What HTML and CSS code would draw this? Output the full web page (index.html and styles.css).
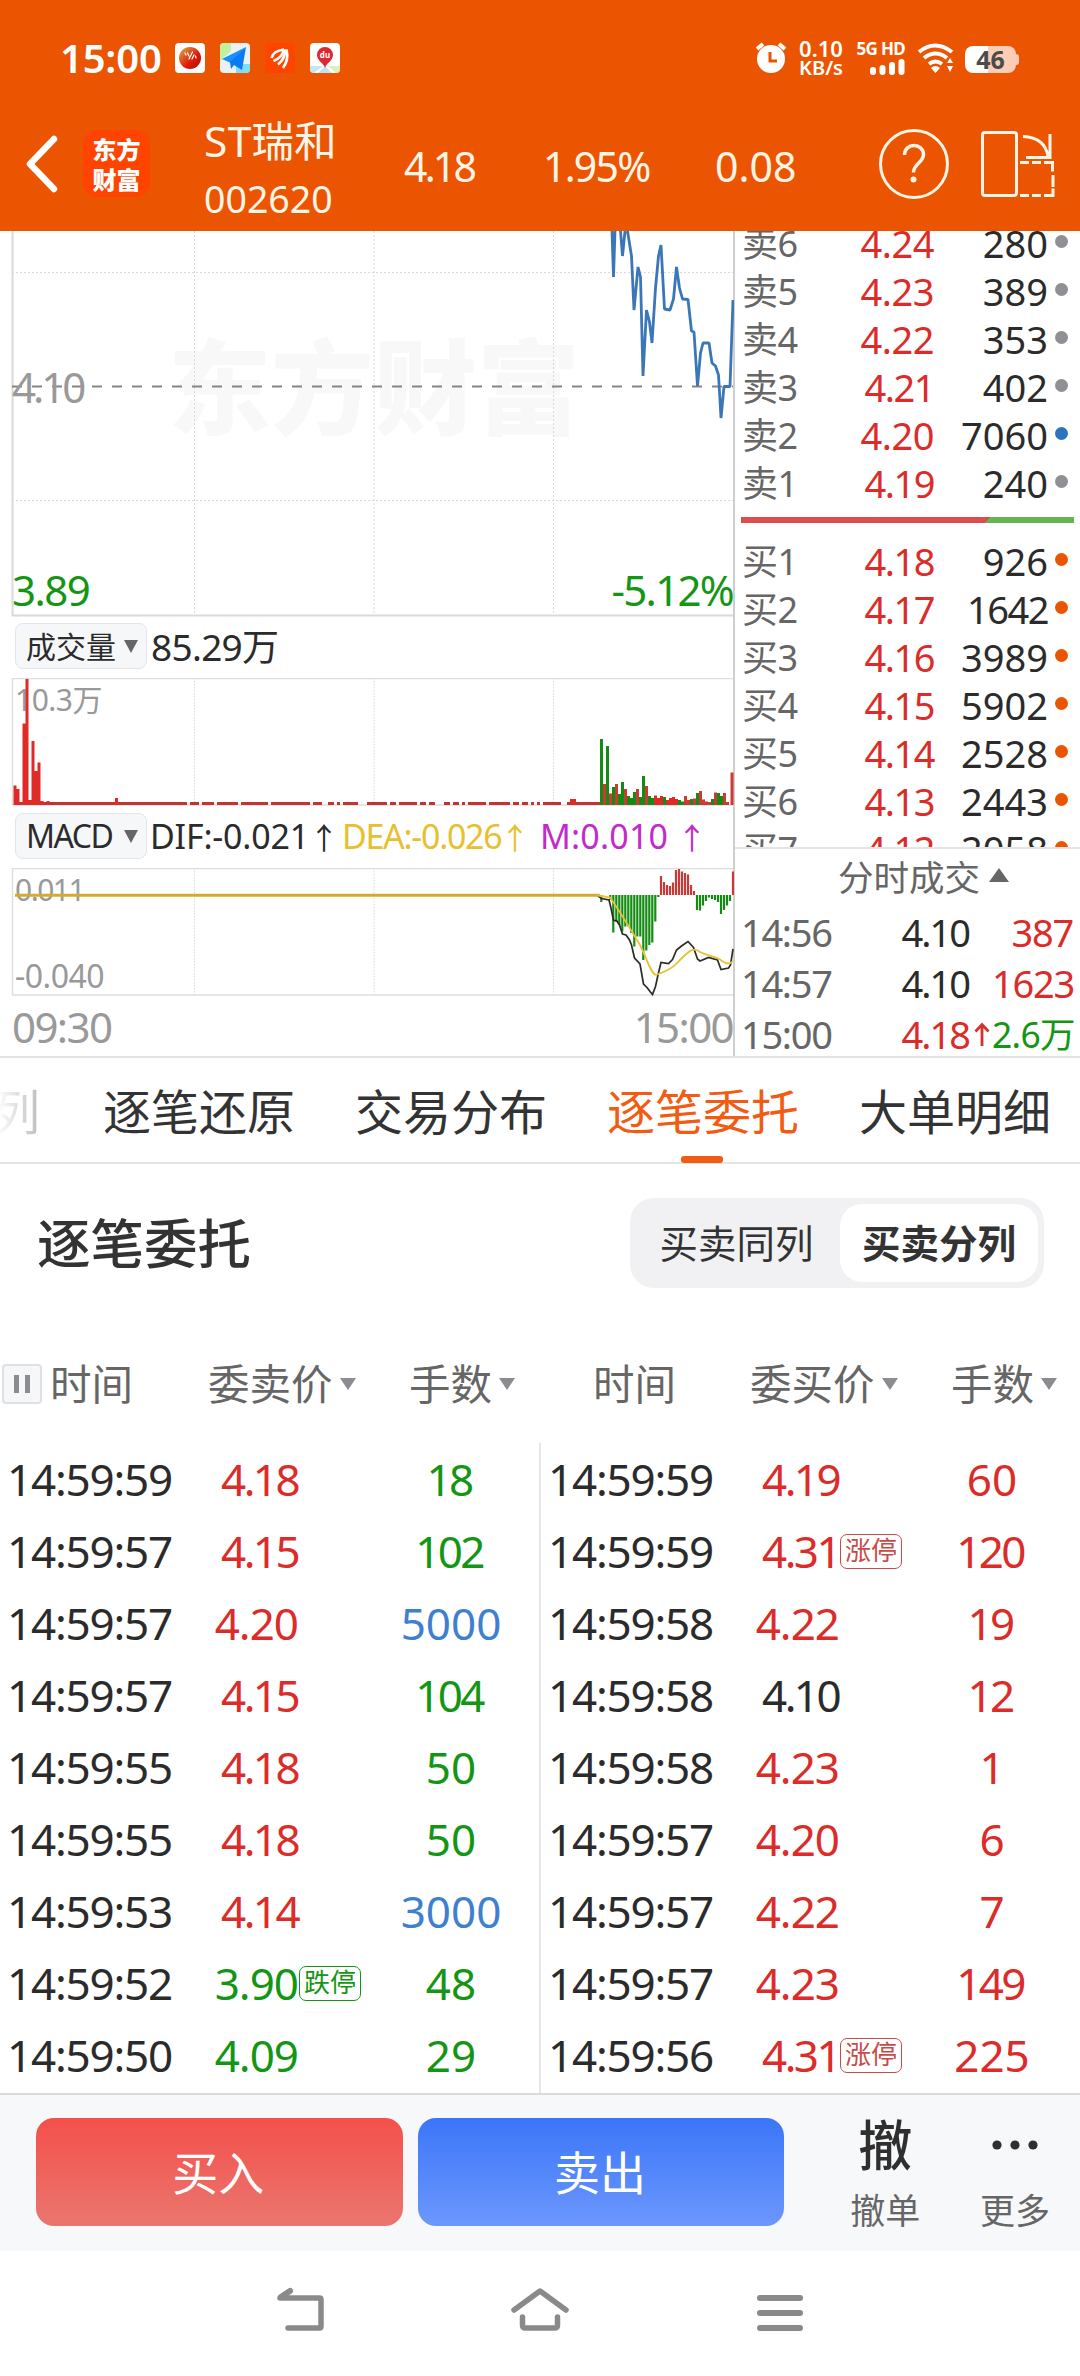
FILE: index.html
```html
<!DOCTYPE html>
<html lang="zh-CN">
<head>
<meta charset="utf-8">
<title>ST瑞和 002620</title>
<link rel="stylesheet" href="styles.css">
</head>
<body>
<header class="top">
  <div class="status">
    <span class="clock">15:00</span>
    <div class="apps">
      <svg viewBox="0 0 30 30"><defs><linearGradient id="g1" x1="0" y1="0" x2="1" y2="1"><stop offset="0.1" stop-color="#d99a3a"/><stop offset="0.6" stop-color="#e01808"/><stop offset="1" stop-color="#a80d08"/></linearGradient></defs><rect width="30" height="30" rx="4" fill="#fff"/><circle cx="15" cy="15" r="11" fill="url(#g1)"/><path d="M10 10l1 2M12.500 10l1.500 3M17.500 9l-3.500 7M19 12l-2 4M20.500 13l.5 2" stroke="#fff" stroke-width="1.200" stroke-linecap="round"/></svg>
      <svg viewBox="0 0 30 30"><rect width="30" height="30" rx="4" fill="#eaf2f6"/><path d="M0 18V4a4 4 0 0 1 4-4h7v8z" fill="#c3f0a0"/><path d="M16 21h14v5a4 4 0 0 1-4 4H16z" fill="#7fdcfb"/><path d="M26 4L2 16l9 4z" fill="#1590ff"/><path d="M26 4L10 19l1 7 3-4 8 5z" fill="#0a7af5"/></svg>
      <svg viewBox="0 0 30 30"><rect width="30" height="30" rx="4" fill="#ff4400"/><g fill="none" stroke="#fff" stroke-width="2.700"><path d="M6.500 15Q8 8 19 6.500"/><path d="M8.500 18Q17 15 19 6.500"/><path d="M13 21.500Q20 16 20.500 6.500"/><path d="M18 25Q24 17 21.500 6.500"/></g></svg>
      <svg viewBox="0 0 30 30"><rect width="30" height="30" rx="4" fill="#fff"/><path d="M0 23h13L4 30a4 4 0 0 1-4-4z" fill="#c3e6f5"/><path d="M30 23H18l8 7a4 4 0 0 0 4-4z" fill="#dff0b4"/><path d="M15 23l-7 7h14z" fill="#bfe2f6"/><path d="M15 25c-1-5-8-7-8-13a8 8 0 0 1 16 0c0 6-7 8-8 13z" fill="#e0262f"/><text x="15" y="15" font-size="8" font-weight="700" fill="#fff" text-anchor="middle">du</text></svg>
    </div>
    <div class="sys">
      <svg class="alarm" viewBox="0 0 30 32"><circle cx="15" cy="17" r="14" fill="#fff"/><path d="M1 7l6-5M29 7l-6-5" stroke="#fff" stroke-width="4"/><path d="M14 10v9h7" fill="none" stroke="#eb5502" stroke-width="3"/></svg>
      <div class="speed"><span>0.10</span><span>KB/s</span></div>
      <div class="signal"><span>5G HD</span><svg viewBox="0 0 35 16"><path d="M3 11v2M12.500 9v4M22 6v7M31.500 3v10" stroke="#fff" stroke-width="6" stroke-linecap="round"/></svg></div>
      <svg class="wifi" viewBox="0 0 38 30"><path d="M2 9q16-13 33 0M7 15q11.500-9 23 0M12 21q6.500-5 13 0" fill="none" stroke="#fff" stroke-width="4"/><path d="M14 25q4.500-4 9 0l-4.500 5z" fill="#fff"/><path d="M30 20l3-5 3 5zM30 23l3 6 3-6z" fill="#fff"/></svg>
      <div class="battery"><b>46</b></div>
    </div>
  </div>
  <div class="nav">
    <svg class="back" viewBox="0 0 36 60"><path d="M29 5L5 30l24 25" fill="none" stroke="#fff" stroke-width="6.500" stroke-linecap="round" stroke-linejoin="round"/></svg>
    <div class="logo"><span>东方</span><span>财富</span></div>
    <div class="stock"><span class="nm">ST瑞和</span><span class="code">002620</span></div>
    <span class="q q1">4.18</span><span class="q q2">1.95%</span><span class="q q3">0.08</span>
    <svg class="help" viewBox="0 0 72 72"><circle cx="36" cy="36" r="33.500" fill="none" stroke="#fff5e6" stroke-width="3"/><path d="M26.500 27c0-13 19-12 19-.5 0 8-10 9-10 18" fill="none" stroke="#fff5e6" stroke-width="3.500"/><circle cx="35.500" cy="51.500" r="3" fill="#fff5e6"/></svg>
    <svg class="rotate" viewBox="0 0 76 70" fill="none" stroke="#fff5e6" stroke-width="3"><rect x="3.500" y="3.500" width="34" height="63" rx="2.500"/><path d="M44 7.500q22 1 25 20M71 5v23.500H47"/><path d="M41 33.500h9M53 33.500h9M65 33.500h8.500v9M74 46v12M41 66.500h9M53 66.500h9M65 66.500h9v-7"/></svg>
  </div>
</header>

<section class="market">
  <div class="charts">
    <div class="price">
      <div class="mark">东方财富</div>
      <svg viewBox="0 231 734 386">
        <g stroke="#d9d9d9" stroke-dasharray="2 2"><path d="M12 272.500H733M12 500.500H733M194.500 231V615M374 231V615M553.500 231V615"/></g>
        <path d="M12.500 231V616M12 615.500H733" stroke="#dadada" stroke-width="2" fill="none"/>
        <path d="M12 386.500H733" stroke="#858585" stroke-width="2" stroke-dasharray="10 10"/>
        <path d="M612 231L613.500 277 615 231M620.500 231L622.500 256 625 231M627.500 231L631.500 256 634 310 638 267 640.500 277 643 376 646.500 310 649.500 322 652 343 655.500 288 658.500 256 661 245 664.500 309 670 310 673.500 299 676.500 267 679.500 288 682.500 299 688 299.500 691.500 331 694 332 697.500 386 700.500 353 703 343 709 343 712 363 715.500 366 718.500 375 721 418 724 386.500 730 386.500 733 300" fill="none" stroke="#3a76b8" stroke-width="2.800" stroke-linejoin="bevel"/>
      </svg>
      <span class="mid">4.10</span><span class="lo">3.89</span><span class="pct">-5.12%</span>
    </div>
    <div class="ind"><span class="chip">成交量<i class="dn"></i></span><span class="vol">85.29万</span></div>
    <div class="pane">
      <span class="p1">10.3万</span>
      <svg viewBox="0 678 734 128">
        <path d="M194.500 678V805M374 678V805M553.500 678V805" stroke="#d9d9d9" stroke-dasharray="1.500 1.500"/>
        <path d="M12.500 805V678.500H733M12 805H733" stroke="#dedede" stroke-width="1.500" fill="none"/>
        <path d="M43 803.500H187M190 803.500h9M202 803.500h12M217 803.500h21M241 803.500h27M271 803.500h39M313 803.500h9M328 803.500h6M337 803.500h3M343 803.500h15M367 803.500h20M390 803.500h6M399 803.500h18M420 803.500h6M429 803.500h6M444 803.500h6M453 803.500h6M462 803.500h3M468 803.500h18M489 803.500h21M513 803.500h6M522 803.500h6M531 803.500h3M537 803.500h3M543 803.500h18M567 803.500h33" stroke="#c4332f" stroke-width="3"/>
        <g fill="none" stroke-width="3">
          <path stroke="#e02a27" d="M15 805V785.500M18 805V789M21 805V802M24 805V723.500M27 805V679M30 805V800M33 805V741M36 805V771M39 805V762.500M42 805V801M48 805V801M116.500 805V798M571.500 805V799M574.500 805V799M655.500 805V795.500M658.500 805V798M661.500 805V796M667.500 805V800M670.500 805V798M673.500 805V797M676.500 805V799"/>
          <path stroke="#cc3a34" d="M604.500 805V784M610.500 805V793.500M616.500 805V784M625.500 805V789M637.500 805V789M646.500 805V786M685.500 805V796M688.500 805V800M694.500 805V798.500M700.500 805V791M703.500 805V799.500M706.500 805V801.500M709.500 805V802M715.500 805V792.500M724.500 805V793M727.500 805V802M732 805V772.500"/>
          <path stroke="#148c14" d="M601.500 805V739M607.500 805V746M613.500 805V787M619.500 805V794M622.500 805V782M628.500 805V796M631.500 805V798M634.500 805V792M640.500 805V797M643.500 805V776M649.500 805V796M652.500 805V798M664.500 805V797M679.500 805V800M682.500 805V801.500M691.500 805V799M697.500 805V793M712.500 805V799M718.500 805V793M721.500 805V796"/>
        </g>
      </svg>
    </div>
    <div class="ind"><span class="chip macd">MACD<i class="dn"></i></span><span class="dif">DIF:-0.021</span><u>↑</u><span class="dea">DEA:-0.026</span><u class="y">↑</u><span class="m">M:0.010</span><u class="p">↑</u></div>
    <div class="pane">
      <span class="p1 m1">0.011</span><span class="p2">-0.040</span>
      <svg viewBox="0 868 734 128">
        <path d="M194.500 868V995M374 868V995M553.500 868V995" stroke="#d9d9d9" stroke-dasharray="1.500 1.500"/>
        <path d="M12.500 995V868.500H733M12 995H733" stroke="#dedede" stroke-width="1.500" fill="none"/>
        <g stroke-width="2.200">
          <path stroke="#148c14" d="M601.300 895v7M610.300 895v5M613.300 895V932.500M616.300 895V922M619.300 895V925M622.300 895V931.500M625.300 895V926.500M628.300 895V926.500M631.300 895V933M634.300 895V946.500M637.300 895V936.500M640.300 895V936.500M643.300 895V960M646.300 895V950.500M649.300 895V945M652.300 895V942.500M655.300 895V921.500M658.300 895v2M697 895V910M700 895V910.500M703 895V905.500M706 895V901M709 895V897.500M712 895V899M715 895V900M718 895V902M721 895V914M724 895V910M727 895V905.500M730 895V901"/>
          <path stroke="#c83a38" d="M661 895V876M664 895V882M667 895V885M670 895V886M673 895V882.500M676 895V870M679 895V869M682 895V871.500M685 895V873M688 895V874.500M691 895V885M694 895V891M733 895V871.500"/>
        </g>
        <path d="M15 895.300H600" stroke="#d3ac2e" stroke-width="3"/>
        <path d="M598 896L601.500 898.500 609 900 611 908 613.500 920.500 616.500 920.500 619.500 925 622.500 934 626 935 629.500 940 631.500 945 634.500 958 640 964 643.500 984 647 987.500 650 991.500 652.500 994.500 655.500 986.500 658 975 661 962.500 668.500 963.500 672.500 959.500 676.500 950 681.500 946 688 941.500 693.500 947.500 697.500 959 700 961 708.500 957.500 717.500 960 721 969.500 728.500 968 730.500 965 733 949" fill="none" stroke="#2b2b2b" stroke-width="1.700"/>
        <path d="M598 895.500L610 897.500C619 910 634 935 640 945C647 958 650 973 656 975C664 972 672 969 678 962C688 952 693 946 700 952C710 957 716 956 722 961Q729 966 733 961" fill="none" stroke="#e6c234" stroke-width="1.800"/>
      </svg>
    </div>
    <div class="axis"><span>09:30</span><span>15:00</span></div>
  </div>

  <aside class="book">
    <div class="levels">
      <div class="lv"><span>卖6</span><b>4.24</b><em>280</em><i></i></div>
      <div class="lv"><span>卖5</span><b>4.23</b><em>389</em><i></i></div>
      <div class="lv"><span>卖4</span><b>4.22</b><em>353</em><i></i></div>
      <div class="lv"><span>卖3</span><b class="n">4.21</b><em>402</em><i></i></div>
      <div class="lv"><span>卖2</span><b>4.20</b><em>7060</em><i class="bl"></i></div>
      <div class="lv"><span>卖1</span><b class="n">4.19</b><em>240</em><i></i></div>
      <div class="ratio"></div>
      <div class="lv"><span>买1</span><b class="n">4.18</b><em>926</em><i class="or"></i></div>
      <div class="lv"><span>买2</span><b class="n">4.17</b><em class="n">1642</em><i class="or"></i></div>
      <div class="lv"><span>买3</span><b class="n">4.16</b><em>3989</em><i class="or"></i></div>
      <div class="lv"><span>买4</span><b class="n">4.15</b><em>5902</em><i class="or"></i></div>
      <div class="lv"><span>买5</span><b class="n">4.14</b><em>2528</em><i class="or"></i></div>
      <div class="lv"><span>买6</span><b class="n">4.13</b><em>2443</em><i class="or"></i></div>
      <div class="lv"><span>买7</span><b class="n">4.12</b><em>2058</em><i class="or"></i></div>
    </div>
    <div class="ticks">
      <div class="th">分时成交<i class="up"></i></div>
      <div class="tk"><span>14:56</span><b>4.10</b><s></s><em>387</em></div>
      <div class="tk"><span>14:57</span><b>4.10</b><s></s><em>1623</em></div>
      <div class="tk"><span>15:00</span><b class="r">4.18</b><s><svg viewBox="0 0 16 24"><path d="M8 24V3M1.500 9.500L8 2.500l6.500 7" fill="none" stroke="#d92f2c" stroke-width="2.800"/></svg></s><em class="g w">2.6万</em></div>
    </div>
  </aside>
</section>

<nav class="tabs"><span class="cut">列</span><span>逐笔还原</span><span>交易分布</span><span class="on">逐笔委托</span><span>大单明细</span></nav>

<section class="head">
  <h2>逐笔委托</h2>
  <div class="seg"><span>买卖同列</span><span class="on">买卖分列</span></div>
</section>

<div class="cols">
  <div class="half"><span class="pause"></span><span class="c1">时间</span><span class="c2">委卖价<i class="dn"></i></span><span class="c3">手数<i class="dn"></i></span></div>
  <div class="half"><span class="c1">时间</span><span class="c2">委买价<i class="dn"></i></span><span class="c3">手数<i class="dn"></i></span></div>
</div>

<section class="orders">
  <div class="list">
    <div class="row"><span>14:59:59</span><b class="n">4.18</b><em class="g n">18</em></div>
    <div class="row"><span>14:59:57</span><b class="n">4.15</b><em class="g n">102</em></div>
    <div class="row"><span>14:59:57</span><b>4.20</b><em class="bl">5000</em></div>
    <div class="row"><span>14:59:57</span><b class="n">4.15</b><em class="g n">104</em></div>
    <div class="row"><span>14:59:55</span><b class="n">4.18</b><em class="g">50</em></div>
    <div class="row"><span>14:59:55</span><b class="n">4.18</b><em class="g">50</em></div>
    <div class="row"><span>14:59:53</span><b class="n">4.14</b><em class="bl">3000</em></div>
    <div class="row"><span>14:59:52</span><b class="g">3.90</b><small class="g">跌停</small><em class="g">48</em></div>
    <div class="row"><span>14:59:50</span><b class="g">4.09</b><em class="g">29</em></div>
  </div>
  <div class="list">
    <div class="row"><span>14:59:59</span><b class="n">4.19</b><em>60</em></div>
    <div class="row"><span>14:59:59</span><b class="n">4.31</b><small>涨停</small><em class="n">120</em></div>
    <div class="row"><span>14:59:58</span><b>4.22</b><em class="n">19</em></div>
    <div class="row"><span>14:59:58</span><b class="n k">4.10</b><em class="n">12</em></div>
    <div class="row"><span>14:59:58</span><b>4.23</b><em>1</em></div>
    <div class="row"><span>14:59:57</span><b>4.20</b><em>6</em></div>
    <div class="row"><span>14:59:57</span><b>4.22</b><em>7</em></div>
    <div class="row"><span>14:59:57</span><b>4.23</b><em class="n">149</em></div>
    <div class="row"><span>14:59:56</span><b class="n">4.31</b><small>涨停</small><em>225</em></div>
  </div>
</section>

<footer class="trade">
  <button class="buy">买入</button><button class="sell">卖出</button>
  <div class="act"><span class="ic">撤</span><span>撤单</span></div>
  <div class="act"><span class="ic"><svg viewBox="0 0 48 12" fill="#2f2f2f"><circle cx="6" cy="6" r="4.600"/><circle cx="24" cy="6" r="4.600"/><circle cx="42" cy="6" r="4.600"/></svg></span><span>更多</span></div>
</footer>
<div class="keys">
  <svg viewBox="0 0 60 60" fill="none" stroke="#8a8a8a" stroke-linecap="round" stroke-linejoin="round"><path d="M20 14l-9 6" stroke-width="6"/><path d="M10 21h39.500q1.500 0 1.500 1.500v27q0 1.500-1.500 1.500H18" stroke-width="5.500"/></svg>
  <svg viewBox="0 0 60 60" fill="none" stroke="#8a8a8a" stroke-width="5.500" stroke-linecap="round" stroke-linejoin="round"><path d="M4 33L30 14l26 19M12.500 40v8q0 3 3 3h29q3 0 3-3v-8"/></svg>
  <svg viewBox="0 0 60 60" stroke="#8a8a8a" stroke-width="6" stroke-linecap="round"><path d="M10 21h40M10 36h40M10 51h40"/></svg>
</div>
</body>
</html>
```

FILE: styles.css
```css
* { box-sizing: border-box; }
body {
  margin: 0; width: 1080px; height: 2376px; overflow: hidden; background: #fff;
  font-family: "Noto Sans", "Noto Sans CJK SC", sans-serif; color: #2b2b2b;
  display: flex; flex-direction: column;
}
svg { display: block; }
b, em, i, u, s { font-style: normal; font-weight: 400; text-decoration: none; }
span, b, em { white-space: nowrap; }
.r { color: #dc2c2a; }
.g { color: #149614 !important; }

/* orange header */
.top { height: 231px; flex: none; background: #eb5502; color: #fff5e6; }
.status { height: 96px; padding: 20px 61px 0 60px; display: flex; align-items: center; color: #fff; }
.clock { width: 115px; font-size: 40px; font-weight: 600; line-height: 76px; letter-spacing: -.200px; }
.apps { display: flex; gap: 15px; }
.apps svg { width: 30px; height: 30px; }
.sys { margin-left: auto; display: flex; align-items: center; font-weight: 600; }
.alarm { width: 30px; height: 32px; }
.speed { width: 46px; margin-left: 12px; display: flex; flex-direction: column; align-items: center; font-size: 22px; line-height: 19px; }
.speed span:last-child { font-size: 20px; }
.signal { margin-left: 13px; width: 48px; display: flex; flex-direction: column; align-items: flex-end; gap: 3px; }
.signal span { font-size: 17px; font-weight: 700; line-height: 15px; letter-spacing: -.700px; }
.signal svg { width: 35px; height: 16px; }
.wifi { width: 38px; height: 30px; margin-left: 12px; }
.battery { position: relative; width: 51px; height: 27px; margin: 3px 3px 0 10px; border-radius: 8px; background: linear-gradient(90deg, #fff 46%, #fccdb4 46%); color: #4a4a4a; text-align: center; font-size: 25px; line-height: 26px; }
.battery::after { content: ""; position: absolute; right: -3px; top: 8px; width: 3px; height: 11px; border-radius: 0 3px 3px 0; background: #fccdb4; }
.battery b { font-weight: 700; }
.nav { height: 135px; display: flex; align-items: center; }
.back { width: 36px; height: 60px; margin-left: 25px; }
.logo { width: 67px; height: 67px; margin-left: 22px; border-radius: 14px; background: #ff4400; color: #fff; display: flex; flex-direction: column; align-items: center; justify-content: center; font: 900 24px/30px "Noto Sans CJK SC", sans-serif; }
.stock { width: 200px; margin-left: 54px; display: flex; flex-direction: column; gap: 2px; margin-top: 12px; }
.nm { font-size: 42.500px; line-height: 56px; letter-spacing: .300px; }
.code { font-size: 37.500px; line-height: 56px; }
.q { font-size: 41px; line-height: 60px; padding-top: 4px; }
.q1 { width: 139px; letter-spacing: -2.800px; }
.q2 { width: 172px; letter-spacing: -1.800px; }
.q3 { width: 163px; }
.help { width: 72px; height: 72px; }
.rotate { width: 76px; height: 70px; margin-left: 29px; }

/* chart column and order book */
.market { height: 827px; flex: none; display: flex; border-bottom: 2px solid #e4e4e4; }
.charts { width: 735px; border-right: 2px solid #cfcfcf; display: flex; flex-direction: column; }
.price { position: relative; height: 386px; }
.price svg { position: relative; width: 734px; height: 386px; }
.price span { position: absolute; font-size: 42px; line-height: 50px; color: #149614; }
.mark { position: absolute; left: 168px; top: 77px; font: 900 103px/150px "Noto Sans CJK SC", sans-serif; color: #f8f8f8; }
.price .mid { left: 12px; top: 131px; color: #999; letter-spacing: -3px; }
.price .lo { left: 12px; top: 334px; letter-spacing: -1.500px; }
.price .pct { right: 0; top: 334px; letter-spacing: -1.700px; }
.ind { height: 61px; padding: 6px 0 0 15px; display: flex; align-items: flex-start; line-height: 46px; font-size: 34px; }
.chip { width: 132px; height: 46px; padding: 0 8px 0 10px; border: 1px solid #e3e5ea; border-radius: 8px; background: #f6f7f9; display: flex; align-items: center; justify-content: space-between; font-size: 30px; line-height: 45px; }
.chip.macd { font-size: 32px; letter-spacing: -1.500px; line-height: 42px; }
.dn { border: 7.500px solid transparent; border-top: 13px solid #666; border-bottom: 0; }
.vol { margin-left: 4px; font-size: 37px; letter-spacing: -.700px; line-height: 47px; }
.dif { width: 167px; margin-left: 3px; letter-spacing: -.200px; }
.dea { width: 161px; letter-spacing: -1.300px; color: #e8bf2e; }
.m { width: 142px; color: #c22bcb; margin-left: 7px; letter-spacing: .200px; }
.ind u { width: 14px; font: 30px/46px "Noto Sans CJK SC", sans-serif; display: flex; justify-content: center; margin-right: 11px; }
.ind .y { color: #e8bf2e; margin-left: 5px; }
.ind .p { color: #c22bcb; margin-left: 3px; }
.pane { position: relative; height: 128px; }
.pane + .ind { height: 62px; padding-top: 7px; }
.pane svg { position: relative; width: 734px; height: 128px; }
.p1, .p2 { position: absolute; left: 15px; top: 2px; font-size: 30px; line-height: 40px; color: #999; letter-spacing: -.500px; }
.p1.m1 { letter-spacing: -1.500px; }
.p2 { top: 88px; font-size: 32px; }
.axis { flex: 1; padding: 2px 0 0 12px; display: flex; justify-content: space-between; align-items: center; font-size: 42px; color: #999; letter-spacing: -1.600px; line-height: 56px; }
.book { flex: 1; display: flex; flex-direction: column; }
.levels { height: 618px; flex: none; overflow: hidden; border-bottom: 2px solid #e4e4e4; }
.lv { height: 48px; display: grid; grid-template-columns: 90px 102px 114px 1fr; padding-left: 7px; align-items: center; line-height: 45px; font-size: 38px; }
.lv:first-child { margin-top: -12px; }
.lv span { font-size: 36px; color: #666; letter-spacing: -.500px; }
.lv b, .tk b, .tk em { text-align: right; color: #dc2c2a; }
.lv b { letter-spacing: -.500px; }
.lv em { text-align: right; }
.lv .n { letter-spacing: -1.500px; }
.lv i { width: 13px; height: 13px; margin: -4px 0 0 7px; border-radius: 50%; background: #8f8f94; }
.lv .bl { background: #2f73bf; }
.lv .or { background: #eb5502; }
.ratio { height: 6px; margin: 10px 6px 14px; background: linear-gradient(135deg, #dc4d4d 73.500%, #62b54f 73.500%); }
.th { height: 57px; padding: 0 0 0 103px; display: flex; align-items: center; gap: 9px; font-size: 35.500px; line-height: 55px; color: #666; }
.up { border: 10.500px solid transparent; border-bottom: 14px solid #666; border-top: 0; margin-top: -6px; }
.tk { height: 51px; display: grid; grid-template-columns: 110px 118px 23px 81px; padding-left: 6px; line-height: 46px; font-size: 38px; align-items: center; }
.tk span { color: #666; letter-spacing: -1.300px; }
.tk b { color: #2b2b2b; letter-spacing: -2px; }
.tk b.r { color: #dc2c2a; }
.tk em { letter-spacing: -1.200px; }
.tk .w { font-size: 35.500px; letter-spacing: -.700px; }
.tk s { padding-left: 5px; }
.tk s svg { width: 16px; height: 24px; }

/* tab strip */
.tabs { height: 106px; flex: none; display: flex; gap: 60px; border-bottom: 2px solid #e4e4e4; font-size: 48px; line-height: 108px; color: #333; }
.tabs span { width: 192px; flex: none; position: relative; font-size: 48px; }
.tabs .cut { width: 51px; margin: 0 0 0 -8px; background: linear-gradient(90deg, #fff 10%, #bbb 95%); background-clip: text; color: transparent; }
.tabs .on { color: #f25b12; }
.tabs .on::after { content: ""; position: absolute; left: 74px; bottom: -1px; width: 42px; height: 7px; border-radius: 3px; background: #f25b12; }
.head { height: 158px; flex: none; padding: 0 36px 0 37px; display: flex; align-items: center; justify-content: space-between; color: #333; }
h2 { margin: 2px 0 0; font-size: 53.500px; font-weight: 500; line-height: 70px; }
.seg { width: 414px; height: 90px; padding: 6px; border-radius: 24px; background: #f1f1f3; display: flex; font-size: 38.500px; line-height: 78px; text-align: center; }
.seg span { flex: 1; }
.seg span:first-child { padding-right: 3px; }
.seg .on { width: 198px; flex: none; border-radius: 22px; background: #fff; font-weight: 600; }

/* order table */
.cols { height: 121px; flex: none; display: grid; grid-template-columns: 540px 540px; padding-top: 34px; font-size: 41.500px; line-height: 56px; color: #666; }
.half { display: flex; align-items: center; height: 56px; padding-left: 53px; }
.half:first-child { padding-left: 2px; }
.pause { width: 40px; height: 40px; margin-right: 8px; border: 2px solid #dfe0e4; border-radius: 4px; background: linear-gradient(#8b8b90, #8b8b90) 10px 9px/5px 18px no-repeat, linear-gradient(#8b8b90, #8b8b90) 21px 9px/5px 18px no-repeat, #f6f7f9; }
.c1 { width: 157px; }
.c2 { width: 201px; display: flex; align-items: center; gap: 7px; }
.half:first-child .c2 { margin-left: 1px; }
.c3 { display: flex; align-items: center; gap: 7px; }
.cols .dn { border-width: 12px 8.500px 0; border-top-color: #8b8b90; }
.orders { height: 650px; flex: none; display: grid; grid-template-columns: 540px 540px; }
.list + .list { box-shadow: -1px 0 #e4e4e4, inset 1px 0 #e9e9e9; }
.row { height: 72px; display: grid; grid-template-columns: 190px 102px 60px 176px; padding-left: 7px; align-items: center; font-size: 44px; line-height: 69px; }
.list + .list .row { padding-left: 8px; }
.row span { letter-spacing: -1.200px; }
.row b { color: #dc2c2a; text-align: right; letter-spacing: -1px; white-space: nowrap; padding-right: 1px; }
.row .n { letter-spacing: -2.600px; }
.row .k { color: #2b2b2b; }
.row small { width: 62px; height: 35px; border: 1.500px solid currentColor; border-radius: 7px; font-size: 26px; line-height: 31px; text-align: center; color: #c94b48; }
.row em { grid-column: 4; margin-left: 1px; width: 182px; text-align: center; color: #dc2c2a; }
.row em.n { margin-left: -1px; }
.row .bl { color: #3f7fd0; }

/* trade bar and system keys */
.trade { height: 158px; flex: none; padding: 24px 0 0 36px; border-top: 2px solid #d9dcdf; background: #f7f8fa; display: flex; }
button { width: 367px; height: 108px; margin: -1px 15px 0 0; padding: 0 2px 4px 0; border: 0; border-radius: 18px; font: 46px/104px "Noto Sans CJK SC", sans-serif; color: #fff; }
.buy { background: linear-gradient(#f4504a, #ea766f); }
.sell { background: linear-gradient(#3b76f8, #6c97fd); }
.act { width: 130px; margin-left: 21px; display: flex; flex-direction: column; align-items: center; font-size: 35px; line-height: 50px; color: #666; }
.act + .act { margin-left: 0; }
.act .ic { height: 66px; display: flex; align-items: center; font-size: 54px; font-weight: 500; color: #2f2f2f; margin-top: -7px; margin-bottom: 8px; }
.act svg { width: 48px; height: 12px; }
.keys { height: 126px; flex: none; padding: 26px 0 0; display: flex; justify-content: center; gap: 180px; }
.keys svg { width: 60px; height: 60px; }
```
